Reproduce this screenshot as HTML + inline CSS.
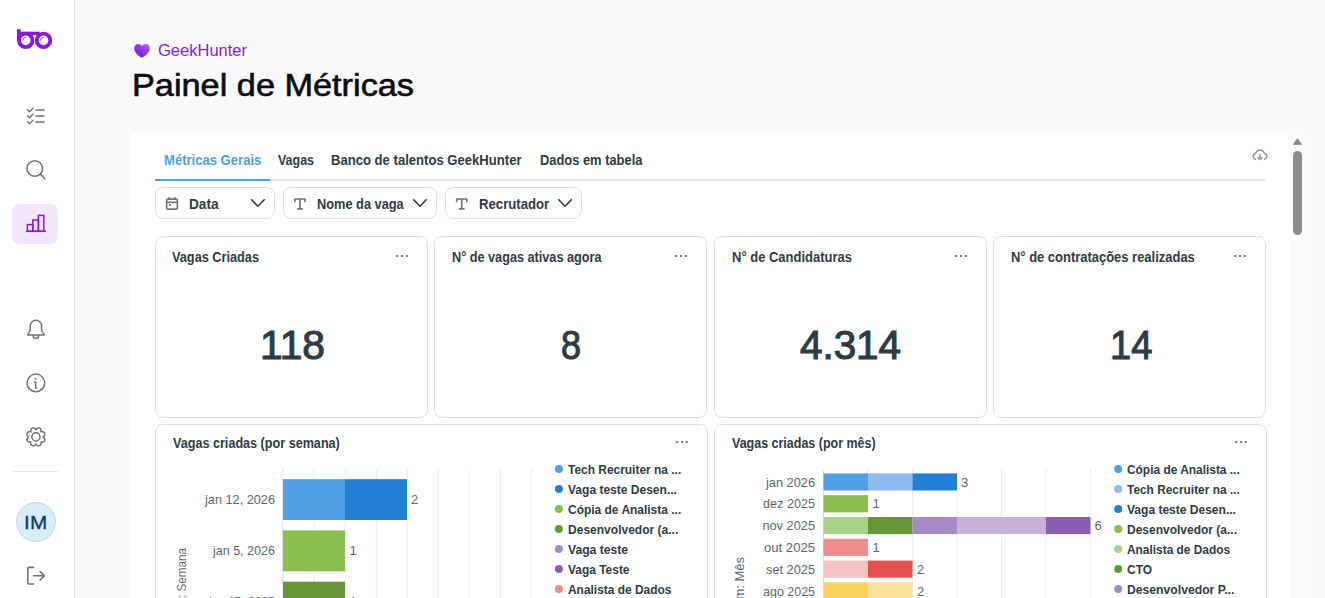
<!DOCTYPE html>
<html><head><meta charset="utf-8">
<style>
*{margin:0;padding:0;box-sizing:border-box}
html,body{width:1325px;height:598px;overflow:hidden;background:#fafafa;font-family:"Liberation Sans",sans-serif}
#side{position:absolute;left:0;top:0;width:75px;height:598px;background:#fff;border-right:1px solid #e2e2e2}
#side svg{position:absolute;overflow:visible}
#frame{position:absolute;left:131px;top:133px;width:1159px;height:465px;background:#fff}
#sb{position:absolute;left:1290px;top:133px;width:15px;height:465px;background:#fbfbfb}
.t{position:absolute;white-space:nowrap;line-height:1}
.box{position:absolute;border:1px solid #dde0e2;background:#fff}
.card{border-radius:8px}
.filter{border-radius:8px}
svg.abs{position:absolute;left:0;top:0;overflow:visible}

</style></head><body>
<div id="side">
<svg width="74" height="598" viewBox="0 0 74 598" style="left:0;top:0">
 <!-- logo -->
 <g fill="#8a16df" stroke="none">
  <rect x="17" y="29.3" width="3.7" height="11"/>
  <path d="M20 31.7 H39.5 V35.2 H20 Z"/>
 </g>
 <g fill="none" stroke="#8a16df" stroke-width="3.8">
  <circle cx="25.7" cy="40.4" r="6.75"/>
  <circle cx="43.5" cy="40.4" r="6.75"/>
 </g>
 <g fill="none" stroke="#8a16df" stroke-width="0.9" stroke-linecap="round">
  <path d="M22.8 40.2 A3.3 3.3 0 0 1 25.4 37.2"/>
  <path d="M40.4 40.2 A3.3 3.3 0 0 1 43 37.2"/>
 </g>
 <!-- checklist -->
 <g fill="none" stroke="#727272" stroke-width="1.4" stroke-linecap="round" stroke-linejoin="round">
  <path d="M27.5 109.7 L29.5 111.7 L32.9 108.3"/>
  <path d="M27.5 115.7 L29.5 117.7 L32.9 114.3"/>
  <path d="M27.5 121.7 L29.5 123.7 L32.9 120.3"/>
  <path d="M35.4 110 H44.6 M35.4 116 H44.6 M35.4 122 H44.6" stroke-width="1.6" stroke-linecap="butt"/>
 </g>
 <!-- search -->
 <g fill="none" stroke="#727272" stroke-width="1.6" stroke-linecap="round">
  <circle cx="34.8" cy="168.5" r="7.8"/>
  <path d="M40.6 174.4 L44.8 178.8"/>
 </g>
 <!-- active bg -->
 <rect x="12" y="204" width="46" height="40" rx="7" fill="#f4e6fd"/>
 <g fill="none" stroke="#8a16df" stroke-width="1.5" stroke-linejoin="miter">
  <path d="M26 231.3 H45.8"/>
  <rect x="27.4" y="224.6" width="5.4" height="6.7"/>
  <rect x="32.8" y="220" width="5.6" height="11.3"/>
  <rect x="38.4" y="215.4" width="5.4" height="15.9"/>
 </g>
 <!-- bell -->
 <g fill="none" stroke="#727272" stroke-width="1.5" stroke-linejoin="round" stroke-linecap="round">
  <path d="M30.2 326 A5.7 5.7 0 0 1 41.6 326 V329.6 Q41.8 332.2 43.8 334 Q44.6 335 43.6 335 H28.2 Q27.2 335 28 334 Q30 332.2 30.2 329.6 Z"/>
  <path d="M33.1 335.6 A2.8 2.8 0 0 0 38.7 335.6"/>
 </g>
 <!-- info -->
 <g fill="none" stroke="#727272" stroke-width="1.5">
  <circle cx="35.9" cy="382.9" r="8.8"/>
  <path d="M34.5 381.9 H35.7 V387.4 Q35.7 388.2 36.8 388.2" stroke-width="1.5" stroke-linecap="round" stroke-linejoin="round"/>
 </g>
 <circle cx="35.6" cy="378.7" r="1.05" fill="#727272"/>
 <!-- gear -->
 <g fill="none" stroke="#727272" stroke-width="1.5" stroke-linejoin="round">
  <path id="gear" d="M35.90 429.80 L36.05 429.49 L36.20 429.26 L36.36 429.06 L36.53 428.89 L36.71 428.73 L36.88 428.58 L37.07 428.45 L37.26 428.34 L37.45 428.24 L37.64 428.15 L37.83 428.08 L38.03 428.03 L38.23 427.99 L38.42 427.96 L38.61 427.95 L38.81 427.95 L39.00 427.97 L39.18 428.01 L39.36 428.06 L39.54 428.12 L39.70 428.20 L39.87 428.29 L40.02 428.40 L40.17 428.52 L40.31 428.65 L40.44 428.80 L40.56 428.95 L40.67 429.12 L40.77 429.30 L40.86 429.48 L40.93 429.68 L41.00 429.89 L41.05 430.10 L41.09 430.32 L41.11 430.55 L41.12 430.79 L41.11 431.03 L41.09 431.29 L41.04 431.56 L40.92 431.88 L41.24 431.76 L41.51 431.71 L41.77 431.69 L42.01 431.68 L42.25 431.69 L42.48 431.71 L42.70 431.75 L42.91 431.80 L43.12 431.87 L43.32 431.94 L43.50 432.03 L43.68 432.13 L43.85 432.24 L44.00 432.36 L44.15 432.49 L44.28 432.63 L44.40 432.78 L44.51 432.93 L44.60 433.10 L44.68 433.26 L44.74 433.44 L44.79 433.62 L44.83 433.80 L44.85 433.99 L44.85 434.19 L44.84 434.38 L44.81 434.57 L44.77 434.77 L44.72 434.97 L44.65 435.16 L44.56 435.35 L44.46 435.54 L44.35 435.73 L44.22 435.92 L44.07 436.09 L43.91 436.27 L43.74 436.44 L43.54 436.60 L43.31 436.75 L43.00 436.90 L43.31 437.05 L43.54 437.20 L43.74 437.36 L43.91 437.53 L44.07 437.71 L44.22 437.88 L44.35 438.07 L44.46 438.26 L44.56 438.45 L44.65 438.64 L44.72 438.83 L44.77 439.03 L44.81 439.23 L44.84 439.42 L44.85 439.61 L44.85 439.81 L44.83 440.00 L44.79 440.18 L44.74 440.36 L44.68 440.54 L44.60 440.70 L44.51 440.87 L44.40 441.02 L44.28 441.17 L44.15 441.31 L44.00 441.44 L43.85 441.56 L43.68 441.67 L43.50 441.77 L43.32 441.86 L43.12 441.93 L42.91 442.00 L42.70 442.05 L42.48 442.09 L42.25 442.11 L42.01 442.12 L41.77 442.11 L41.51 442.09 L41.24 442.04 L40.92 441.92 L41.04 442.24 L41.09 442.51 L41.11 442.77 L41.12 443.01 L41.11 443.25 L41.09 443.48 L41.05 443.70 L41.00 443.91 L40.93 444.12 L40.86 444.32 L40.77 444.50 L40.67 444.68 L40.56 444.85 L40.44 445.00 L40.31 445.15 L40.17 445.28 L40.02 445.40 L39.87 445.51 L39.70 445.60 L39.54 445.68 L39.36 445.74 L39.18 445.79 L39.00 445.83 L38.81 445.85 L38.61 445.85 L38.42 445.84 L38.23 445.81 L38.03 445.77 L37.83 445.72 L37.64 445.65 L37.45 445.56 L37.26 445.46 L37.07 445.35 L36.88 445.22 L36.71 445.07 L36.53 444.91 L36.36 444.74 L36.20 444.54 L36.05 444.31 L35.90 444.00 L35.75 444.31 L35.60 444.54 L35.44 444.74 L35.27 444.91 L35.09 445.07 L34.92 445.22 L34.73 445.35 L34.54 445.46 L34.35 445.56 L34.16 445.65 L33.97 445.72 L33.77 445.77 L33.57 445.81 L33.38 445.84 L33.19 445.85 L32.99 445.85 L32.80 445.83 L32.62 445.79 L32.44 445.74 L32.26 445.68 L32.10 445.60 L31.93 445.51 L31.78 445.40 L31.63 445.28 L31.49 445.15 L31.36 445.00 L31.24 444.85 L31.13 444.68 L31.03 444.50 L30.94 444.32 L30.87 444.12 L30.80 443.91 L30.75 443.70 L30.71 443.48 L30.69 443.25 L30.68 443.01 L30.69 442.77 L30.71 442.51 L30.76 442.24 L30.88 441.92 L30.56 442.04 L30.29 442.09 L30.03 442.11 L29.79 442.12 L29.55 442.11 L29.32 442.09 L29.10 442.05 L28.89 442.00 L28.68 441.93 L28.48 441.86 L28.30 441.77 L28.12 441.67 L27.95 441.56 L27.80 441.44 L27.65 441.31 L27.52 441.17 L27.40 441.02 L27.29 440.87 L27.20 440.70 L27.12 440.54 L27.06 440.36 L27.01 440.18 L26.97 440.00 L26.95 439.81 L26.95 439.61 L26.96 439.42 L26.99 439.23 L27.03 439.03 L27.08 438.83 L27.15 438.64 L27.24 438.45 L27.34 438.26 L27.45 438.07 L27.58 437.88 L27.73 437.71 L27.89 437.53 L28.06 437.36 L28.26 437.20 L28.49 437.05 L28.80 436.90 L28.49 436.75 L28.26 436.60 L28.06 436.44 L27.89 436.27 L27.73 436.09 L27.58 435.92 L27.45 435.73 L27.34 435.54 L27.24 435.35 L27.15 435.16 L27.08 434.97 L27.03 434.77 L26.99 434.57 L26.96 434.38 L26.95 434.19 L26.95 433.99 L26.97 433.80 L27.01 433.62 L27.06 433.44 L27.12 433.26 L27.20 433.10 L27.29 432.93 L27.40 432.78 L27.52 432.63 L27.65 432.49 L27.80 432.36 L27.95 432.24 L28.12 432.13 L28.30 432.03 L28.48 431.94 L28.68 431.87 L28.89 431.80 L29.10 431.75 L29.32 431.71 L29.55 431.69 L29.79 431.68 L30.03 431.69 L30.29 431.71 L30.56 431.76 L30.88 431.88 L30.76 431.56 L30.71 431.29 L30.69 431.03 L30.68 430.79 L30.69 430.55 L30.71 430.32 L30.75 430.10 L30.80 429.89 L30.87 429.68 L30.94 429.48 L31.03 429.30 L31.13 429.12 L31.24 428.95 L31.36 428.80 L31.49 428.65 L31.63 428.52 L31.78 428.40 L31.93 428.29 L32.10 428.20 L32.26 428.12 L32.44 428.06 L32.62 428.01 L32.80 427.97 L32.99 427.95 L33.19 427.95 L33.38 427.96 L33.57 427.99 L33.77 428.03 L33.97 428.08 L34.16 428.15 L34.35 428.24 L34.54 428.34 L34.73 428.45 L34.92 428.58 L35.09 428.73 L35.27 428.89 L35.44 429.06 L35.60 429.26 L35.75 429.49Z"/>
  <circle cx="35.9" cy="436.9" r="4.1"/>
 </g>
 <!-- separator -->
 <rect x="12" y="471" width="46" height="1" fill="#e6e6e6"/>
 <!-- avatar -->
 <circle cx="36" cy="522" r="19.5" fill="#d5eef8" stroke="#d4d4d4" stroke-width="1"/>
 <!-- logout -->
 <g fill="none" stroke="#727272" stroke-width="1.6" stroke-linecap="round" stroke-linejoin="round">
  <path d="M33.5 567.4 H28.8 A1 1 0 0 0 27.8 568.4 V583 A1 1 0 0 0 28.8 584 H33.5"/>
  <path d="M33.6 575.8 H44.2 M40.2 571.6 L44.4 575.8 L40.2 580"/>
 </g>
</svg>
<div class="t" style="left:24.3px;top:514px;font-size:18px;color:#163a5c;letter-spacing:0.3px;transform-origin:0 0;transform:scaleX(1.15);-webkit-text-stroke:0.3px #163a5c">IM</div>
</div>


<div id="frame"></div>
<div id="sb"></div>
<svg class="abs" width="1325" height="598" viewBox="0 0 1325 598">
 <!-- heart -->
 <defs>
  <linearGradient id="hg" x1="0.9" y1="0.1" x2="0.2" y2="0.9">
   <stop offset="0" stop-color="#ae5cf8"/><stop offset="0.5" stop-color="#9534ee"/><stop offset="1" stop-color="#6a22e2"/>
  </linearGradient>
 </defs>
 <path d="M141.8 57.6 C140.6 57.6 134.2 52.6 134.2 48.4 C134.2 45.6 136 44 138.2 44 C139.8 44 141.1 44.8 141.9 46 C142.8 44.7 144.2 44 145.8 44 C148 44 149.9 45.6 149.9 48.4 C149.9 52.6 143 57.6 141.8 57.6 Z" fill="url(#hg)"/>
 <!-- scrollbar -->
 <path d="M1297.5 138.6 L1301.6 144.4 H1293.4 Z" fill="#8c8c8c" stroke="#8c8c8c" stroke-width="0.8" stroke-linejoin="round"/>
 <rect x="1293" y="151" width="9" height="84" rx="4.5" fill="#8c8c8c"/>
 <!-- cloud download -->
 <g fill="none" stroke="#8e979e" stroke-width="1.4" stroke-linecap="round" stroke-linejoin="round">
  <path d="M1255.4 159.4 A3.2 3.2 0 0 1 1256 153.2 A4.2 4.2 0 0 1 1264.2 153.4 A3.1 3.1 0 0 1 1264.8 159.4"/>
  <path d="M1260 154.5 V159.6 M1257.8 157.4 L1260 159.6 L1262.2 157.4"/>
 </g>
 <!-- tab line -->
 <rect x="155" y="179" width="1111" height="2" fill="#e5e8ea"/>
 <rect x="155" y="179" width="115" height="2" fill="#509ee3"/>
</svg>

<div class="box filter" style="left:155px;top:187px;width:120px;height:32px"></div>
<div class="box filter" style="left:283px;top:187px;width:154px;height:32px"></div>
<div class="box filter" style="left:445px;top:187px;width:137px;height:32px"></div>

<div class="box card" style="left:155px;top:236px;width:273px;height:182px"></div>
<div class="box card" style="left:434px;top:236px;width:273px;height:182px"></div>
<div class="box card" style="left:714px;top:236px;width:273px;height:182px"></div>
<div class="box card" style="left:993px;top:236px;width:273px;height:182px"></div>
<div class="box card" style="left:155px;top:424px;width:553px;height:200px"></div>
<div class="box card" style="left:714px;top:424px;width:553px;height:200px"></div>

<svg class="abs" width="1325" height="598" viewBox="0 0 1325 598">
 <!-- filter icons -->
 <g fill="none" stroke="#6c767e" stroke-width="1.7" stroke-linejoin="round">
  <rect x="166.6" y="199.1" width="10.8" height="10.1" rx="1.4"/>
  <path d="M166.6 202.3 H177.4"/>
  <path d="M169.2 197.2 V199.6 M175 197.2 V199.6" stroke-width="1.9"/>
 </g>
 <rect x="169" y="204" width="2" height="1.9" fill="#6c767e"/>
 <g fill="none" stroke="#6c767e" stroke-width="1.7" stroke-linejoin="round" stroke-linecap="round">
  <path d="M294.9 201.4 V199 H305 V201.4 M299.95 199 V208.9 M297.8 208.9 H302.1"/>
  <path d="M456.7 201.4 V199 H466.8 V201.4 M461.75 199 V208.9 M459.6 208.9 H463.9"/>
 </g>
 <g fill="none" stroke="#2f3b44" stroke-width="1.6" stroke-linecap="round" stroke-linejoin="round">
  <path d="M251.6 199.8 L257.9 206.2 L264.2 199.8"/>
  <path d="M413.6 199.8 L419.9 206.2 L426.2 199.8"/>
  <path d="M558.8 199.8 L565.1 206.2 L571.4 199.8"/>
 </g>
 <!-- card dots -->
 <g fill="#737c84">
  <rect x="396.2" y="255" width="2" height="2"/><rect x="401" y="255" width="2" height="2"/><rect x="405.8" y="255" width="2" height="2"/>
  <rect x="675.2" y="255" width="2" height="2"/><rect x="680" y="255" width="2" height="2"/><rect x="684.8" y="255" width="2" height="2"/>
  <rect x="955.2" y="255" width="2" height="2"/><rect x="960" y="255" width="2" height="2"/><rect x="964.8" y="255" width="2" height="2"/>
  <rect x="1234.2" y="255" width="2" height="2"/><rect x="1239" y="255" width="2" height="2"/><rect x="1243.8" y="255" width="2" height="2"/>
  <rect x="676.2" y="441" width="2" height="2"/><rect x="681" y="441" width="2" height="2"/><rect x="685.8" y="441" width="2" height="2"/>
  <rect x="1235.2" y="441" width="2" height="2"/><rect x="1240" y="441" width="2" height="2"/><rect x="1244.8" y="441" width="2" height="2"/>
 </g>
 <!-- chart1 grid -->
 <g fill="#ececec">
  <rect x="313.8" y="469" width="1" height="129"/><rect x="344.8" y="469" width="1" height="129"/>
  <rect x="375.8" y="469" width="1" height="129"/><rect x="406.8" y="469" width="1" height="129"/>
  <rect x="437.8" y="469" width="1" height="129"/><rect x="468.8" y="469" width="1" height="129"/>
  <rect x="499.8" y="469" width="1" height="129"/><rect x="530.8" y="469" width="1" height="129"/>
 </g>
 <rect x="282.3" y="469" width="1" height="129" fill="#dcdcdc"/>
 <!-- chart1 bars -->
 <rect x="283" y="479.2" width="62" height="40.8" fill="#509ee3"/>
 <rect x="345" y="479.2" width="62" height="40.8" fill="#227fd2"/>
 <rect x="283" y="530.4" width="62" height="40.9" fill="#88bf4d"/>
 <rect x="283" y="581.7" width="62" height="40.9" fill="#689636"/>
 <!-- rotated axis label chart1 -->
 <!-- legend1 dots -->
 <g>
  <circle cx="558.9" cy="468.9" r="4" fill="#509ee3"/>
  <circle cx="558.9" cy="488.9" r="4" fill="#227fd2"/>
  <circle cx="558.9" cy="508.9" r="4" fill="#88bf4d"/>
  <circle cx="558.9" cy="528.9" r="4" fill="#689636"/>
  <circle cx="558.9" cy="548.9" r="4" fill="#a989c5"/>
  <circle cx="558.9" cy="568.9" r="4" fill="#8a5eb0"/>
  <circle cx="558.9" cy="588.9" r="4" fill="#ef8c8c"/>
 </g>
 <!-- chart2 grid -->
 <g fill="#ececec">
  <rect x="867.5" y="469" width="1" height="129"/><rect x="912" y="469" width="1" height="129"/>
  <rect x="956.5" y="469" width="1" height="129"/><rect x="1001" y="469" width="1" height="129"/>
  <rect x="1045.5" y="469" width="1" height="129"/><rect x="1090" y="469" width="1" height="129"/>
 </g>
 <rect x="823" y="469" width="1" height="129" fill="#dcdcdc"/>
 <!-- chart2 bars -->
 <g>
  <rect x="823.5" y="473.4" width="44.5" height="17.1" fill="#509ee3"/>
  <rect x="868" y="473.4" width="44.5" height="17.1" fill="#8cbbec"/>
  <rect x="912.5" y="473.4" width="44.5" height="17.1" fill="#227fd2"/>
  <rect x="823.5" y="495.2" width="44.5" height="17.1" fill="#88bf4d"/>
  <rect x="823.5" y="517" width="44.5" height="17.1" fill="#a8d18a"/>
  <rect x="868" y="517" width="44.5" height="17.1" fill="#689636"/>
  <rect x="912.5" y="517" width="44.5" height="17.1" fill="#a989c5"/>
  <rect x="957" y="517" width="89" height="17.1" fill="#c7b1d9"/>
  <rect x="1046" y="517" width="44.5" height="17.1" fill="#8a5eb0"/>
  <rect x="823.5" y="538.8" width="44.5" height="17.1" fill="#ef8c8c"/>
  <rect x="823.5" y="560.6" width="44.5" height="17.1" fill="#f5c3c3"/>
  <rect x="868" y="560.6" width="44.5" height="17.1" fill="#e55151"/>
  <rect x="823.5" y="582.4" width="44.5" height="17.1" fill="#f7d35c"/>
  <rect x="868" y="582.4" width="44.5" height="17.1" fill="#fae29c"/>
 </g>
 <!-- legend2 dots -->
 <g>
  <circle cx="1118.2" cy="468.9" r="4" fill="#509ee3"/>
  <circle cx="1118.2" cy="488.9" r="4" fill="#8cbbec"/>
  <circle cx="1118.2" cy="508.9" r="4" fill="#227fd2"/>
  <circle cx="1118.2" cy="528.9" r="4" fill="#88bf4d"/>
  <circle cx="1118.2" cy="548.9" r="4" fill="#a8d18a"/>
  <circle cx="1118.2" cy="568.9" r="4" fill="#689636"/>
  <circle cx="1118.2" cy="588.9" r="4" fill="#a989c5"/>
 </g>
</svg>
<div class="t" style="right:1150.8px;top:547.6px;font-size:13px;color:#5d6770;transform:rotate(-90deg) scaleX(0.9);transform-origin:100% 0">Criado em: Semana</div>
<div class="t" style="right:591.9px;top:557px;font-size:13px;color:#5d6770;transform:rotate(-90deg) scaleX(1.0);transform-origin:100% 0">Criado em: Mês</div>

<div class="t" id="t0" style="top:42.55px;font-size:16.6px;font-weight:400;color:#8b21d9;left:158.40px;transform-origin:0 0;transform:scaleX(0.9948);">GeekHunter</div>
<div class="t" id="t1" style="top:69.98px;font-size:30.5px;font-weight:400;color:#0c0c14;-webkit-text-stroke:0.6px #0c0c14;left:131.50px;transform-origin:0 0;transform:scaleX(1.1239);">Painel de Métricas</div>
<div class="t" id="t2" style="top:152.95px;font-size:14px;font-weight:700;color:#509ee3;left:163.70px;transform-origin:0 0;transform:scaleX(0.9329);">Métricas Gerais</div>
<div class="t" id="t3" style="top:152.95px;font-size:14px;font-weight:700;color:#2f3b44;left:278.10px;transform-origin:0 0;transform:scaleX(0.8892);">Vagas</div>
<div class="t" id="t4" style="top:152.95px;font-size:14px;font-weight:700;color:#2f3b44;left:331.20px;transform-origin:0 0;transform:scaleX(0.9346);">Banco de talentos GeekHunter</div>
<div class="t" id="t5" style="top:152.95px;font-size:14px;font-weight:700;color:#2f3b44;left:539.90px;transform-origin:0 0;transform:scaleX(0.9203);">Dados em tabela</div>
<div class="t" id="t6" style="top:196.75px;font-size:14px;font-weight:700;color:#2f3b44;left:188.60px;transform-origin:0 0;transform:scaleX(0.9750);">Data</div>
<div class="t" id="t7" style="top:196.75px;font-size:14px;font-weight:700;color:#2f3b44;left:316.70px;transform-origin:0 0;transform:scaleX(0.9132);">Nome da vaga</div>
<div class="t" id="t8" style="top:196.75px;font-size:14px;font-weight:700;color:#2f3b44;left:478.50px;transform-origin:0 0;transform:scaleX(0.9399);">Recrutador</div>
<div class="t" id="t9" style="top:249.85px;font-size:14px;font-weight:700;color:#2f3b44;left:172.20px;transform-origin:0 0;transform:scaleX(0.9088);">Vagas Criadas</div>
<div class="t" id="t10" style="top:249.85px;font-size:14px;font-weight:700;color:#2f3b44;left:451.50px;transform-origin:0 0;transform:scaleX(0.9054);">N° de vagas ativas agora</div>
<div class="t" id="t11" style="top:249.85px;font-size:14px;font-weight:700;color:#2f3b44;left:731.50px;transform-origin:0 0;transform:scaleX(0.9281);">N° de Candidaturas</div>
<div class="t" id="t12" style="top:249.85px;font-size:14px;font-weight:700;color:#2f3b44;left:1010.60px;transform-origin:0 0;transform:scaleX(0.9256);">N° de contratações realizadas</div>
<div class="t" id="t13" style="top:325.14px;font-size:40px;font-weight:400;color:#2f3b44;-webkit-text-stroke:1.1px #2f3b44;left:260.00px;transform-origin:0 0;transform:scaleX(1.0191);">118</div>
<div class="t" id="t14" style="top:325.14px;font-size:40px;font-weight:400;color:#2f3b44;-webkit-text-stroke:1.1px #2f3b44;left:560.90px;transform-origin:0 0;transform:scaleX(0.8989);">8</div>
<div class="t" id="t15" style="top:325.14px;font-size:40px;font-weight:400;color:#2f3b44;-webkit-text-stroke:1.1px #2f3b44;left:800.00px;transform-origin:0 0;transform:scaleX(1.0089);">4.314</div>
<div class="t" id="t16" style="top:325.14px;font-size:40px;font-weight:400;color:#2f3b44;-webkit-text-stroke:1.1px #2f3b44;left:1109.60px;transform-origin:0 0;transform:scaleX(0.9506);">14</div>
<div class="t" id="t17" style="top:435.75px;font-size:14px;font-weight:700;color:#2f3b44;left:172.80px;transform-origin:0 0;transform:scaleX(0.9006);">Vagas criadas (por semana)</div>
<div class="t" id="t18" style="top:435.85px;font-size:14px;font-weight:700;color:#2f3b44;left:732.00px;transform-origin:0 0;transform:scaleX(0.8915);">Vagas criadas (por mês)</div>
<div class="t" id="t19" style="top:493.00px;font-size:13px;font-weight:400;color:#5d6770;left:274.50px;transform-origin:100% 0;transform:translateX(-100%) scaleX(0.9780);">jan 12, 2026</div>
<div class="t" id="t20" style="top:544.20px;font-size:13px;font-weight:400;color:#5d6770;left:274.50px;transform-origin:100% 0;transform:translateX(-100%) scaleX(0.9651);">jan 5, 2026</div>
<div class="t" id="t21" style="top:595.40px;font-size:13px;font-weight:400;color:#5d6770;left:274.50px;transform-origin:100% 0;transform:translateX(-100%) scaleX(0.9310);">dez 15, 2025</div>
<div class="t" id="t22" style="top:493.00px;font-size:13px;font-weight:400;color:#5d6770;left:411.00px;transform-origin:0 0;transform:scaleX(1.0000);">2</div>
<div class="t" id="t23" style="top:544.20px;font-size:13px;font-weight:400;color:#5d6770;left:349.50px;transform-origin:0 0;transform:scaleX(1.0000);">1</div>
<div class="t" id="t24" style="top:595.40px;font-size:13px;font-weight:400;color:#5d6770;left:349.50px;transform-origin:0 0;transform:scaleX(1.0000);">1</div>
<div class="t" id="t25" style="top:462.60px;font-size:13px;font-weight:700;color:#2f3b44;left:567.70px;transform-origin:0 0;transform:scaleX(0.9181);">Tech Recruiter na ...</div>
<div class="t" id="t26" style="top:482.60px;font-size:13px;font-weight:700;color:#2f3b44;left:567.70px;transform-origin:0 0;transform:scaleX(0.9246);">Vaga teste Desen...</div>
<div class="t" id="t27" style="top:502.60px;font-size:13px;font-weight:700;color:#2f3b44;left:567.70px;transform-origin:0 0;transform:scaleX(0.9200);">Cópia de Analista ...</div>
<div class="t" id="t28" style="top:522.60px;font-size:13px;font-weight:700;color:#2f3b44;left:567.70px;transform-origin:0 0;transform:scaleX(0.9252);">Desenvolvedor (a...</div>
<div class="t" id="t29" style="top:542.60px;font-size:13px;font-weight:700;color:#2f3b44;left:567.70px;transform-origin:0 0;transform:scaleX(0.9343);">Vaga teste</div>
<div class="t" id="t30" style="top:562.60px;font-size:13px;font-weight:700;color:#2f3b44;left:567.70px;transform-origin:0 0;transform:scaleX(0.9183);">Vaga Teste</div>
<div class="t" id="t31" style="top:582.60px;font-size:13px;font-weight:700;color:#2f3b44;left:567.70px;transform-origin:0 0;transform:scaleX(0.9175);">Analista de Dados</div>
<div class="t" id="t32" style="top:475.60px;font-size:13px;font-weight:400;color:#5d6770;left:814.50px;transform-origin:100% 0;transform:translateX(-100%) scaleX(0.9821);">jan 2026</div>
<div class="t" id="t33" style="top:497.40px;font-size:13px;font-weight:400;color:#5d6770;left:814.50px;transform-origin:100% 0;transform:translateX(-100%) scaleX(0.9701);">dez 2025</div>
<div class="t" id="t34" style="top:519.20px;font-size:13px;font-weight:400;color:#5d6770;left:814.50px;transform-origin:100% 0;transform:translateX(-100%) scaleX(0.9832);">nov 2025</div>
<div class="t" id="t35" style="top:541.00px;font-size:13px;font-weight:400;color:#5d6770;left:814.50px;transform-origin:100% 0;transform:translateX(-100%) scaleX(1.0077);">out 2025</div>
<div class="t" id="t36" style="top:562.80px;font-size:13px;font-weight:400;color:#5d6770;left:814.50px;transform-origin:100% 0;transform:translateX(-100%) scaleX(0.9825);">set 2025</div>
<div class="t" id="t37" style="top:584.60px;font-size:13px;font-weight:400;color:#5d6770;left:814.50px;transform-origin:100% 0;transform:translateX(-100%) scaleX(0.9570);">ago 2025</div>
<div class="t" id="t38" style="top:475.60px;font-size:13px;font-weight:400;color:#5d6770;left:961.00px;transform-origin:0 0;transform:scaleX(1.0000);">3</div>
<div class="t" id="t39" style="top:497.40px;font-size:13px;font-weight:400;color:#5d6770;left:872.50px;transform-origin:0 0;transform:scaleX(1.0000);">1</div>
<div class="t" id="t40" style="top:519.20px;font-size:13px;font-weight:400;color:#5d6770;left:1094.50px;transform-origin:0 0;transform:scaleX(1.0000);">6</div>
<div class="t" id="t41" style="top:541.00px;font-size:13px;font-weight:400;color:#5d6770;left:872.50px;transform-origin:0 0;transform:scaleX(1.0000);">1</div>
<div class="t" id="t42" style="top:562.80px;font-size:13px;font-weight:400;color:#5d6770;left:917.00px;transform-origin:0 0;transform:scaleX(1.0000);">2</div>
<div class="t" id="t43" style="top:584.60px;font-size:13px;font-weight:400;color:#5d6770;left:917.00px;transform-origin:0 0;transform:scaleX(1.0000);">2</div>
<div class="t" id="t44" style="top:462.60px;font-size:13px;font-weight:700;color:#2f3b44;left:1127.00px;transform-origin:0 0;transform:scaleX(0.9159);">Cópia de Analista ...</div>
<div class="t" id="t45" style="top:482.60px;font-size:13px;font-weight:700;color:#2f3b44;left:1127.00px;transform-origin:0 0;transform:scaleX(0.9141);">Tech Recruiter na ...</div>
<div class="t" id="t46" style="top:502.60px;font-size:13px;font-weight:700;color:#2f3b44;left:1127.00px;transform-origin:0 0;transform:scaleX(0.9246);">Vaga teste Desen...</div>
<div class="t" id="t47" style="top:522.60px;font-size:13px;font-weight:700;color:#2f3b44;left:1127.00px;transform-origin:0 0;transform:scaleX(0.9227);">Desenvolvedor (a...</div>
<div class="t" id="t48" style="top:542.60px;font-size:13px;font-weight:700;color:#2f3b44;left:1127.00px;transform-origin:0 0;transform:scaleX(0.9148);">Analista de Dados</div>
<div class="t" id="t49" style="top:562.60px;font-size:13px;font-weight:700;color:#2f3b44;left:1127.00px;transform-origin:0 0;transform:scaleX(0.9222);">CTO</div>
<div class="t" id="t50" style="top:582.60px;font-size:13px;font-weight:700;color:#2f3b44;left:1127.00px;transform-origin:0 0;transform:scaleX(0.9367);">Desenvolvedor P...</div>
</body></html>
